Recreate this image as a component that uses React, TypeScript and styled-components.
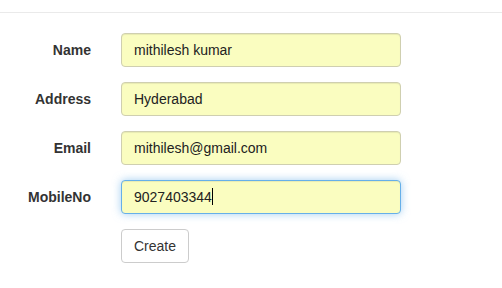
import React from "react";
import styled, { createGlobalStyle } from "styled-components";

const Global = createGlobalStyle`
  html, body { margin: 0; padding: 0; background: #fff; }
  body {
    font-family: "Liberation Sans", Arial, Helvetica, sans-serif;
    font-size: 14px;
    line-height: 1.42857;
    color: #333;
  }
`;

const Page = styled.div`
  padding-top: 12px;
`;

const Rule = styled.hr`
  margin: 0 0 20px 0;
  border: 0;
  border-top: 1px solid #eaeaea;
  height: 0;
`;

const Form = styled.form`
  display: flex;
  flex-direction: column;
  gap: 15px;
`;

const Group = styled.div`
  display: grid;
  grid-template-columns: 91px 280px;
  column-gap: 30px;
  align-items: start;
`;

const Label = styled.label`
  text-align: right;
  font-weight: bold;
  padding-top: 7px;
  line-height: 20px;
  color: #333;
`;

const Input = styled.div<{ $focus?: boolean }>`
  box-sizing: border-box;
  height: 34px;
  width: 280px;
  padding: 6px 12px;
  line-height: 20px;
  background: #fafdc0;
  border: 1px solid ${(p) => (p.$focus ? "#66afe9" : "#cfcfb0")};
  border-radius: 4px;
  color: #222;
  box-shadow: ${(p) =>
    p.$focus
      ? "inset 0 1px 1px rgba(0,0,0,.075), 0 0 8px rgba(102,175,233,.6)"
      : "inset 0 1px 1px rgba(0,0,0,.075)"};
  white-space: nowrap;
`;

const Caret = styled.span`
  display: inline-block;
  width: 1px;
  height: 17px;
  background: #000;
  vertical-align: -3px;
`;

const Button = styled.button`
  grid-column: 2;
  justify-self: start;
  box-sizing: border-box;
  height: 34px;
  width: 68px;
  padding: 6px 12px;
  font-family: inherit;
  font-size: 14px;
  line-height: 20px;
  color: #333;
  background: #fff;
  border: 1px solid #ccc;
  border-radius: 4px;
`;

export default function App() {
  return (
    <Page>
      <Global />
      <Rule />
      <Form>
        <Group>
          <Label>Name</Label>
          <Input>mithilesh kumar</Input>
        </Group>
        <Group>
          <Label>Address</Label>
          <Input>Hyderabad</Input>
        </Group>
        <Group>
          <Label>Email</Label>
          <Input>mithilesh@gmail.com</Input>
        </Group>
        <Group>
          <Label>MobileNo</Label>
          <Input $focus>
            9027403344
            <Caret />
          </Input>
        </Group>
        <Group>
          <Button type="button">Create</Button>
        </Group>
      </Form>
    </Page>
  );
}
